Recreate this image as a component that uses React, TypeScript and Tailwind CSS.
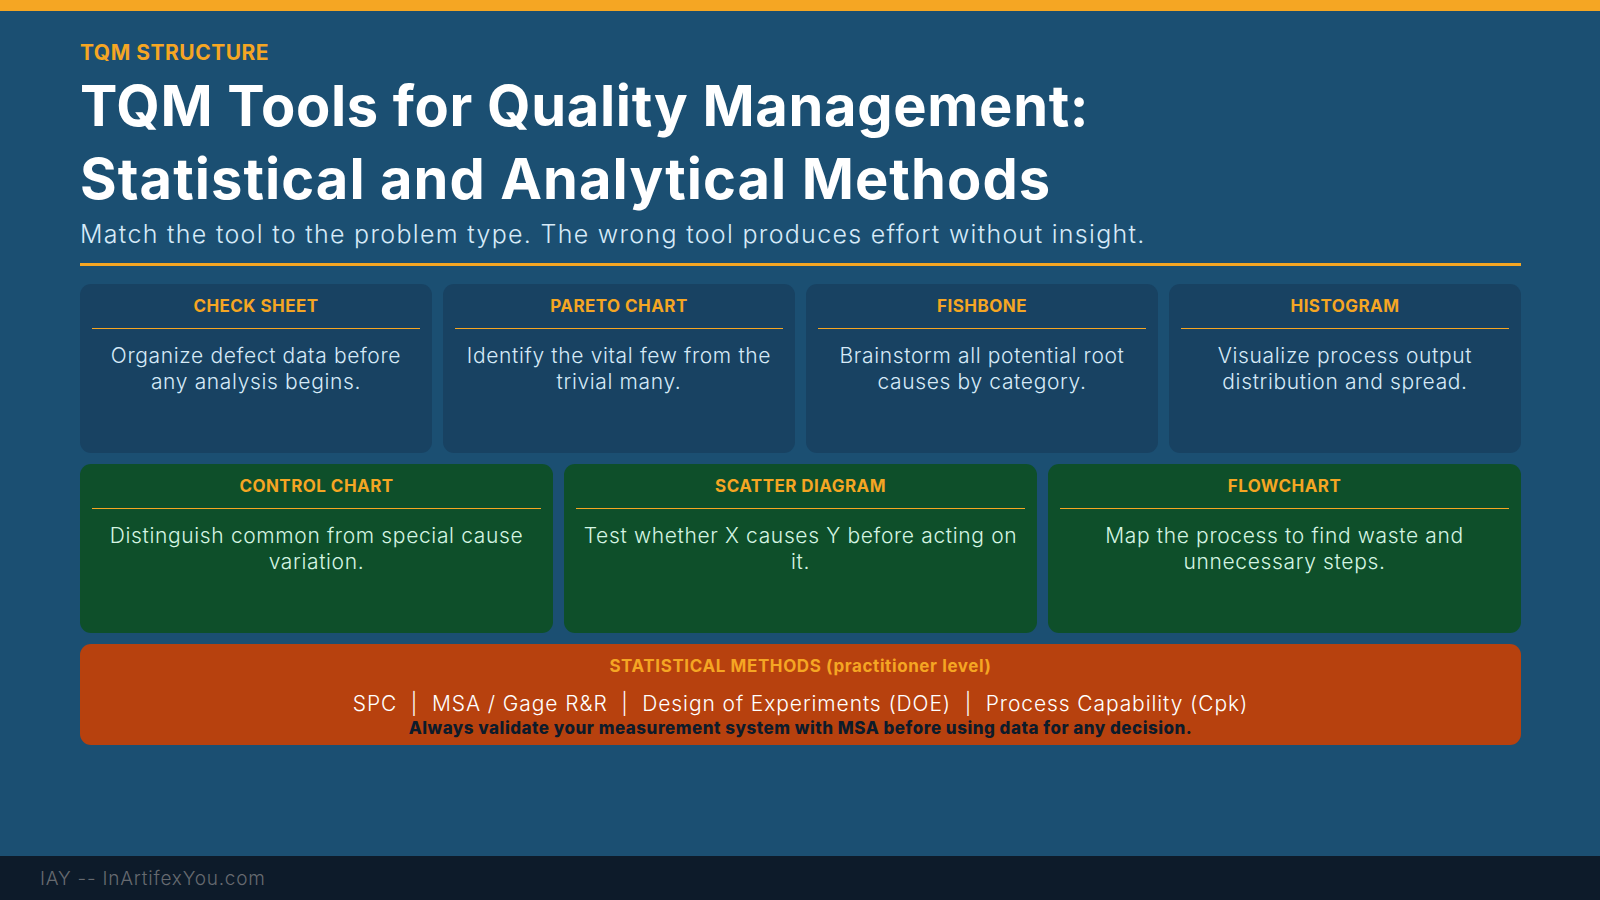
const FONT = "font-['Inter','Liberation_Sans',sans-serif]";

const TOP_CARDS = [
  { title: "CHECK SHEET", text: "Organize defect data before any analysis begins." },
  { title: "PARETO CHART", text: "Identify the vital few from the trivial many." },
  { title: "FISHBONE", text: "Brainstorm all potential root causes by category." },
  { title: "HISTOGRAM", text: "Visualize process output distribution and spread." },
];

const MID_CARDS = [
  { title: "CONTROL CHART", text: "Distinguish common from special cause variation." },
  { title: "SCATTER DIAGRAM", text: "Test whether X causes Y before acting on it." },
  { title: "FLOWCHART", text: "Map the process to find waste and unnecessary steps." },
];

function Card({ title, text, green }: { title: string; text: string; green?: boolean }) {
  return (
    <div className={`h-[169px] rounded-[11px] px-3 ${green ? "bg-[#0e4f2a]" : "bg-[#184262]"}`}>
      <div className="h-[45px] border-b border-[#f5a623] pt-[11px] text-center text-[17px] leading-[22px] font-bold tracking-[0.45px] text-[#f5a623]">
        {title}
      </div>
      <p
        className={`mt-[14px] px-1 text-center text-[21px] leading-[26px] font-light tracking-[0.65px] ${
          green ? "text-[#d5f5e3]" : "text-[#d6eaf8]"
        }`}
      >
        {text}
      </p>
    </div>
  );
}

export default function App() {
  return (
    <div className={`flex h-screen w-full flex-col overflow-hidden bg-[#1b4f72] ${FONT}`}>
      <div className="h-[11px] bg-[#f5a623]" />
      <div className="flex-1 pr-[79px] pl-20">
        <div className="mt-[30px] text-[21px] leading-[24px] font-bold tracking-[0.5px] text-[#f5a623]">TQM STRUCTURE</div>
        <h1 className="mt-[5px] text-[56px] leading-[73px] font-bold text-white">
          <span className="block tracking-[0.68px]">TQM Tools for Quality Management:</span>
          <span className="block tracking-[1.07px]">Statistical and Analytical Methods</span>
        </h1>
        <p className="mt-[1px] border-b-[3px] border-[#f5a623] pb-[12px] text-[25px] leading-[34px] font-light tracking-[1.3px] text-[#d6eaf8]">
          Match the tool to the problem type. The wrong tool produces effort without insight.
        </p>
        <div className="mt-[18px] grid grid-cols-4 gap-[11px]">
          {TOP_CARDS.map((c) => (
            <Card key={c.title} title={c.title} text={c.text} />
          ))}
        </div>
        <div className="mt-[11px] grid grid-cols-3 gap-[11px]">
          {MID_CARDS.map((c) => (
            <Card key={c.title} title={c.title} text={c.text} green />
          ))}
        </div>
        <div className="mt-[11px] h-[101px] rounded-[11px] bg-[#b7410e] text-center">
          <div className="pt-[11px] text-[17px] leading-[22px] font-bold tracking-[0.6px] text-[#f5a623]">
            STATISTICAL METHODS (practitioner level)
          </div>
          <div className="mt-[13px] text-[21px] leading-[27px] font-light tracking-[0.9px] whitespace-pre text-white">
            {"SPC  |  MSA / Gage R&R  |  Design of Experiments (DOE)  |  Process Capability (Cpk)"}
          </div>
          <div className="text-[17px] leading-[22px] font-extrabold tracking-[0.5px] text-[#0d1b2a]">
            Always validate your measurement system with MSA before using data for any decision.
          </div>
        </div>
      </div>
      <div className="flex h-[44px] items-center bg-[#0d1b2a] px-10 pt-[2px] text-[19px] font-light tracking-[0.8px] text-[#666a70]">
        IAY -- InArtifexYou.com
      </div>
    </div>
  );
}
